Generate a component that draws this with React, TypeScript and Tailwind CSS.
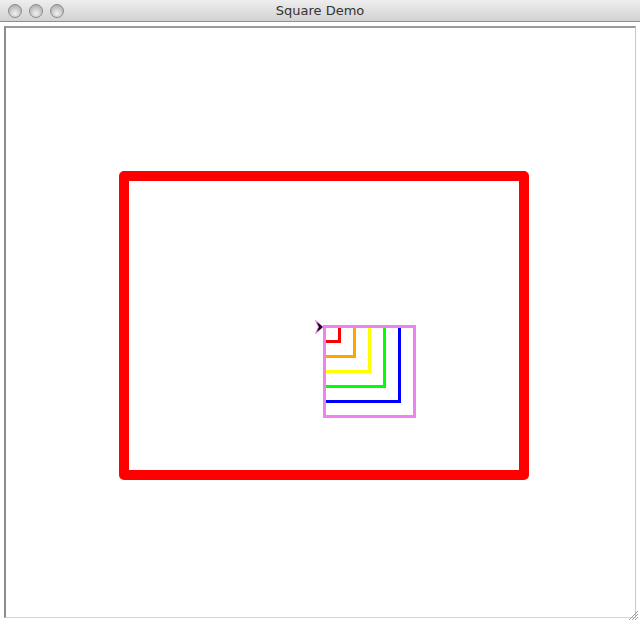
import * as React from 'react';

const squares = [
  { size: 75, color: '#0000ff' },
  { size: 60, color: '#00ff00' },
  { size: 45, color: '#ffff00' },
  { size: 30, color: '#ffa500' },
  { size: 15, color: '#ff0000' },
];

const TrafficLight = () => (
  <div className="w-[14px] h-[14px] rounded-full border border-[#8a8a8a] bg-[radial-gradient(circle_at_50%_70%,#f2f2f2_0%,#c4c4c4_55%,#a2a2a2_100%)]" />
);

export default function App() {
  return (
    <div className="w-[640px] h-[622px] bg-white flex flex-col" style={{ fontFamily: '"DejaVu Sans", "Liberation Sans", sans-serif' }}>
      {/* title bar */}
      <div className="relative h-[22px] shrink-0 flex items-center bg-gradient-to-b from-[#eeeeee] to-[#d2d2d2] border-b border-[#8f8f8f]">
        <div className="flex items-center gap-[7px] pl-[8px]">
          <TrafficLight />
          <TrafficLight />
          <TrafficLight />
        </div>
        <div className="absolute inset-0 flex items-center justify-center text-[13px] text-[#333] leading-none">
          Square Demo
        </div>
      </div>

      {/* content */}
      <div className="relative flex-1 pt-[4px] pl-[4px] pr-[4px] pb-[3px]">
        <div className="w-[632px] h-[592px] border-l-2 border-t-2 border-r border-b border-l-[#8c8c8c] border-t-[#9a9a9a] border-r-[#c8c8c8] border-b-[#d6d6d6]">
          <svg width="629" height="589" viewBox="6 28 629 589" className="block">
            <rect x="124" y="176" width="400" height="299" fill="none" stroke="#ff0000" strokeWidth="10" strokeLinejoin="round" />
            {squares.map((s) => (
              <rect key={s.color} x="324.5" y="326.5" width={s.size} height={s.size} fill="none" stroke={s.color} strokeWidth="3" />
            ))}
            <rect x="324.5" y="326.5" width="90" height="90" fill="none" stroke="#ee82ee" strokeWidth="3" />
            <polygon points="315.5,320.5 323.5,327 315.5,333.5 318.5,327" fill="#000" stroke="#ee82ee" strokeWidth="1" strokeLinejoin="round" />
          </svg>
        </div>
        {/* resize grip */}
        <svg width="12" height="12" viewBox="0 0 12 12" className="absolute right-[1px] bottom-[1px]">
          <line x1="11" y1="2" x2="2" y2="11" stroke="#a0a0a0" strokeWidth="1" />
          <line x1="11" y1="5" x2="5" y2="11" stroke="#a0a0a0" strokeWidth="1" />
          <line x1="11" y1="8" x2="8" y2="11" stroke="#a0a0a0" strokeWidth="1" />
        </svg>
      </div>
    </div>
  );
}
